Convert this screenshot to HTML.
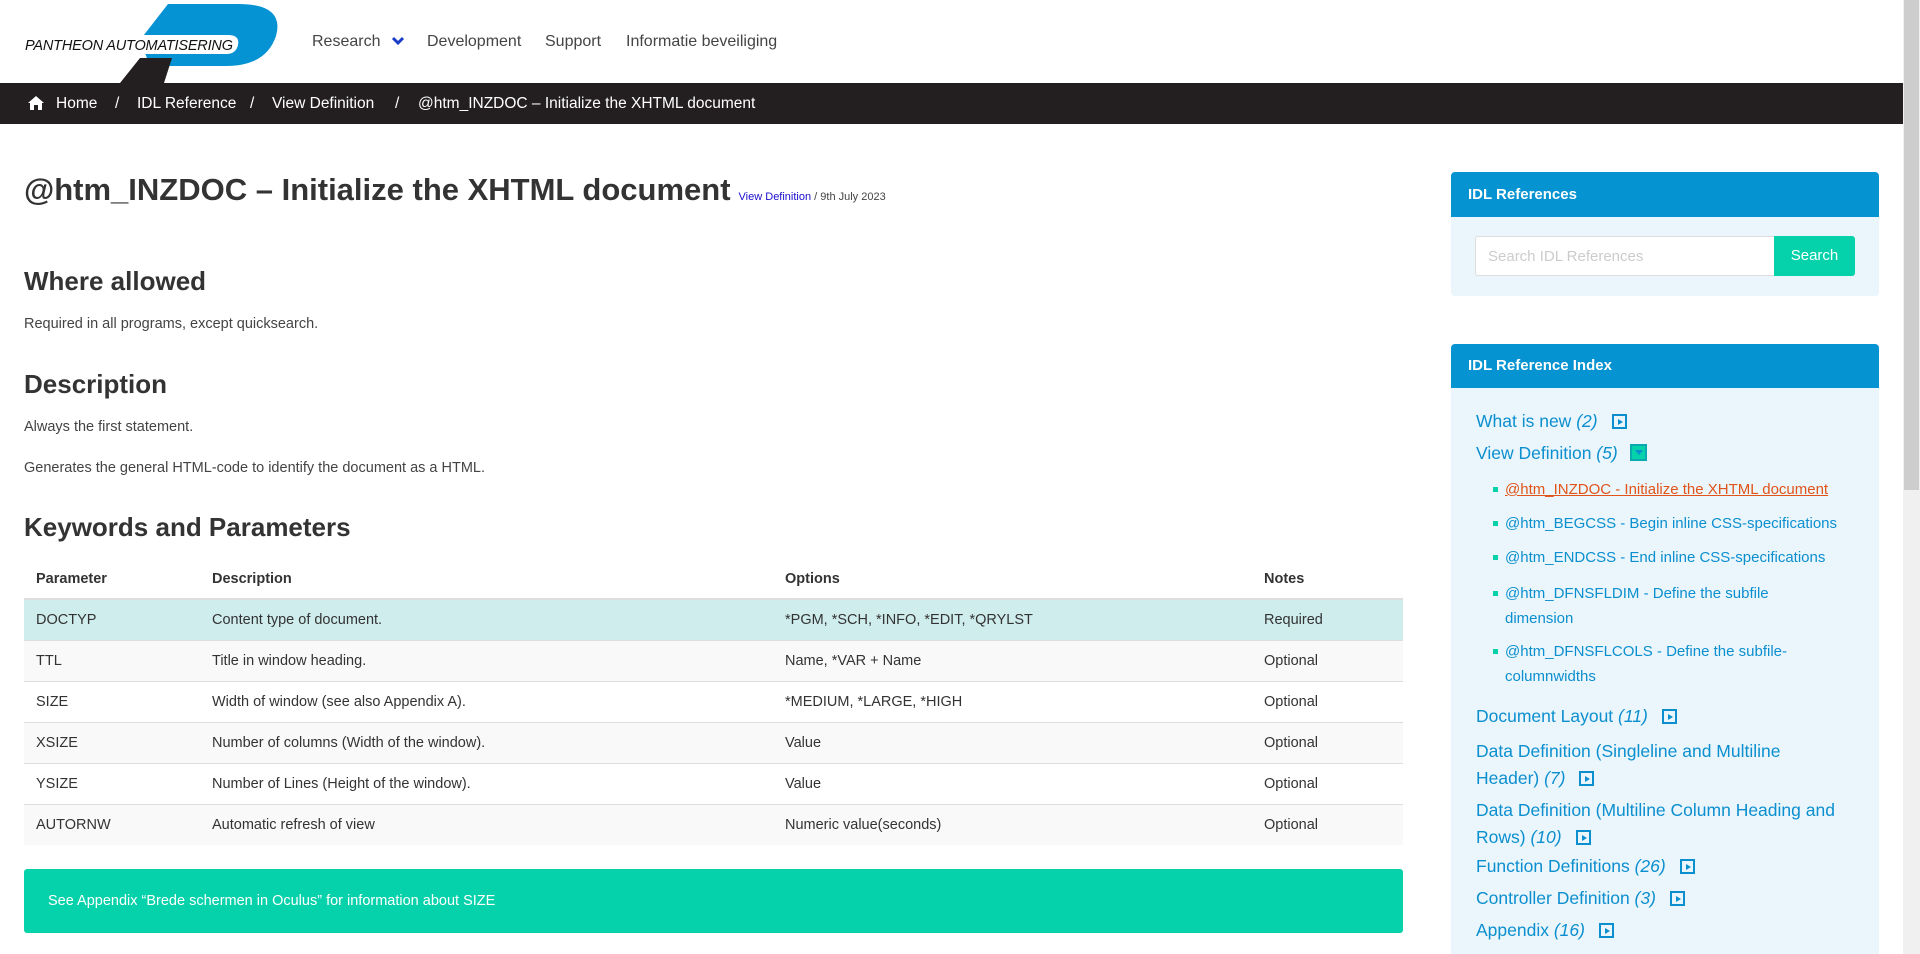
<!DOCTYPE html>
<html><head><meta charset="utf-8"><style>
*{margin:0;padding:0;box-sizing:border-box}
body{width:1920px;height:954px;overflow:hidden;background:#fff;font-family:"Liberation Sans",sans-serif;color:#333;position:relative}
.abs{position:absolute}
.nav{top:33px;font-size:16px;color:#444}
.bc{top:83px;left:0;width:1903px;height:41px;background:#231f20;color:#fff;font-size:15.5px}
.bc span{position:absolute;top:12px}
h1{position:absolute;left:24px;top:172px;font-size:31px;font-weight:bold;color:#333;white-space:nowrap}
h1 small{font-size:11px;font-weight:normal;color:#444;margin-left:8px}
h1 small a{color:#1a0dcc;text-decoration:none}
h2{position:absolute;left:24px;font-size:26px;font-weight:bold;color:#333}
p{position:absolute;left:24px;font-size:14.5px;color:#444}
table{position:absolute;left:24px;top:560px;width:1379px;border-collapse:collapse;font-size:14.5px;color:#333}
th{text-align:left;height:39px;padding-left:12px;font-weight:bold;border-bottom:2px solid #ddd}
td{height:41px;padding-left:12px;border-top:1px solid #ddd}
tr.a td{background:#f9f9f9}
tr.h td{background:#d0eded}
.note{left:24px;top:869px;width:1379px;height:64px;background:#05d1aa;border-radius:3px;color:#fff;font-size:14.5px;padding:24px 24px}
.ph{left:1451px;width:428px;background:#0593d1;color:#fff;font-weight:bold;font-size:15px;padding-left:17px;border-radius:4px 4px 0 0}
.pb{left:1451px;width:428px;background:#eaf6fc}
.lk{position:absolute;left:1476px;color:#0c8fcf;font-size:17.5px;white-space:nowrap}
.lk i{font-style:italic}
.bx{display:inline-block;width:15px;height:15px;border:2px solid #0c8fcf;vertical-align:-2px;margin-left:14px;position:relative}
.bx:after{content:"";position:absolute;left:4px;top:2.5px;border-left:5px solid #0c8fcf;border-top:3.5px solid transparent;border-bottom:3.5px solid transparent}
.sub{position:absolute;left:1505px;color:#0c8fcf;font-size:15px;line-height:25px}
.sub:before{content:"";position:absolute;left:-12px;top:10px;width:5px;height:5px;background:#05d1aa}
</style></head><body>
<!-- logo -->
<svg class="abs" style="left:0;top:0" width="290" height="84" viewBox="0 0 290 84">
<path d="M168 4 L238 4 Q285 4 276 36 Q266 66 226 66 L178 66 L150 66 L140 40 Z" fill="#0693d3"/>
<path d="M140 58 L172 58 L164 83 L120 83 Z" fill="#231f20"/>
<path d="M20 35 L228 35 Q240 35 238 45 Q236 54 226 54 L20 54 Z" fill="#fff"/>
<text x="25" y="50" font-family="Liberation Sans" font-style="italic" font-size="14.5" fill="#111" textLength="208">PANTHEON AUTOMATISERING</text>
</svg>
<div class="abs nav" style="left:312px">Research <svg width="14" height="10" style="margin-left:6px" viewBox="0 0 14 10"><path d="M2 2 L7 7 L12 2" stroke="#1a3cc7" stroke-width="3" fill="none"/></svg></div>
<div class="abs nav" style="left:427px">Development</div>
<div class="abs nav" style="left:545px">Support</div>
<div class="abs nav" style="left:626px">Informatie beveiliging</div>
<div class="abs bc">
<svg class="abs" style="left:27px;top:12px" width="18" height="15" viewBox="0 0 18 15"><path d="M9 1 L1 8 L3 8 L3 15 L7 15 L7 10 L11 10 L11 15 L15 15 L15 8 L17 8 Z" fill="#fff"/></svg>
<span style="left:56px">Home</span><span style="left:115px">/</span>
<span style="left:137px">IDL Reference</span><span style="left:250px">/</span>
<span style="left:272px">View Definition</span><span style="left:395px">/</span>
<span style="left:418px">@htm_INZDOC – Initialize the XHTML document</span>
</div>
<div class="abs" style="left:1903px;top:0;width:17px;height:954px;background:#f0f0f0"></div>
<div class="abs" style="left:1904px;top:0;width:15px;height:490px;background:#cdcdcd"></div>

<h1>@htm_INZDOC – Initialize the XHTML document<small><a>View Definition</a> / 9th July 2023</small></h1>
<h2 style="top:266px">Where allowed</h2>
<p style="top:316px">Required in all programs, except quicksearch.</p>
<h2 style="top:369px">Description</h2>
<p style="top:419px">Always the first statement.</p>
<p style="top:460px">Generates the general HTML-code to identify the document as a HTML.</p>
<h2 style="top:512px">Keywords and Parameters</h2>
<table>
<tr><th style="width:176px">Parameter</th><th style="width:573px">Description</th><th style="width:479px">Options</th><th>Notes</th></tr>
<tr class="h"><td>DOCTYP</td><td>Content type of document.</td><td>*PGM, *SCH, *INFO, *EDIT, *QRYLST</td><td>Required</td></tr>
<tr class="a"><td>TTL</td><td>Title in window heading.</td><td>Name, *VAR + Name</td><td>Optional</td></tr>
<tr><td>SIZE</td><td>Width of window (see also Appendix A).</td><td>*MEDIUM, *LARGE, *HIGH</td><td>Optional</td></tr>
<tr class="a"><td>XSIZE</td><td>Number of columns (Width of the window).</td><td>Value</td><td>Optional</td></tr>
<tr><td>YSIZE</td><td>Number of Lines (Height of the window).</td><td>Value</td><td>Optional</td></tr>
<tr class="a"><td>AUTORNW</td><td>Automatic refresh of view</td><td>Numeric value(seconds)</td><td>Optional</td></tr>
</table>
<div class="abs note">See Appendix “Brede schermen in Oculus” for information about SIZE</div>

<div class="abs ph" style="top:172px;height:45px;line-height:45px">IDL References</div>
<div class="abs pb" style="top:217px;height:79px;border-radius:0 0 4px 4px"></div>
<div class="abs" style="left:1475px;top:236px;width:300px;height:40px;background:#fff;border:1px solid #ddd;border-radius:3px 0 0 3px;color:#ccc;font-size:15px;padding:11px 12px">Search IDL References</div>
<div class="abs" style="left:1774px;top:236px;width:81px;height:40px;background:#05d1aa;color:#fff;font-size:15px;padding-top:11px;text-align:center;border-radius:0 3px 3px 0">Search</div>

<div class="abs ph" style="top:344px;height:44px;line-height:44px">IDL Reference Index</div>
<div class="abs pb" style="top:388px;height:566px"></div>
<div class="lk" style="top:411px">What is new <i>(2)</i><span class="bx"></span></div>
<div class="lk" style="top:443px">View Definition <i>(5)</i><span style="display:inline-block;width:17px;height:17px;background:#05d1aa;vertical-align:-2px;margin-left:12px;border:2px solid #0aa9b0;position:relative"><span style="position:absolute;left:3px;top:4px;border-top:5px solid #0c8fcf;border-left:4px solid transparent;border-right:4px solid transparent"></span></span></div>
<div class="sub" style="top:477px;color:#e0541a;text-decoration:underline">@htm_INZDOC - Initialize the XHTML document</div>
<div class="sub" style="top:511px">@htm_BEGCSS - Begin inline CSS-specifications</div>
<div class="sub" style="top:545px">@htm_ENDCSS - End inline CSS-specifications</div>
<div class="sub" style="top:581px">@htm_DFNSFLDIM - Define the subfile<br>dimension</div>
<div class="sub" style="top:639px">@htm_DFNSFLCOLS - Define the subfile-<br>columnwidths</div>
<div class="lk" style="top:706px">Document Layout <i>(11)</i><span class="bx"></span></div>
<div class="lk" style="top:738px;line-height:27px">Data Definition (Singleline and Multiline<br>Header) <i>(7)</i><span class="bx"></span></div>
<div class="lk" style="top:797px;line-height:27px">Data Definition (Multiline Column Heading and<br>Rows) <i>(10)</i><span class="bx"></span></div>
<div class="lk" style="top:856px">Function Definitions <i>(26)</i><span class="bx"></span></div>
<div class="lk" style="top:888px">Controller Definition <i>(3)</i><span class="bx"></span></div>
<div class="lk" style="top:920px">Appendix <i>(16)</i><span class="bx"></span></div>
</body></html>
